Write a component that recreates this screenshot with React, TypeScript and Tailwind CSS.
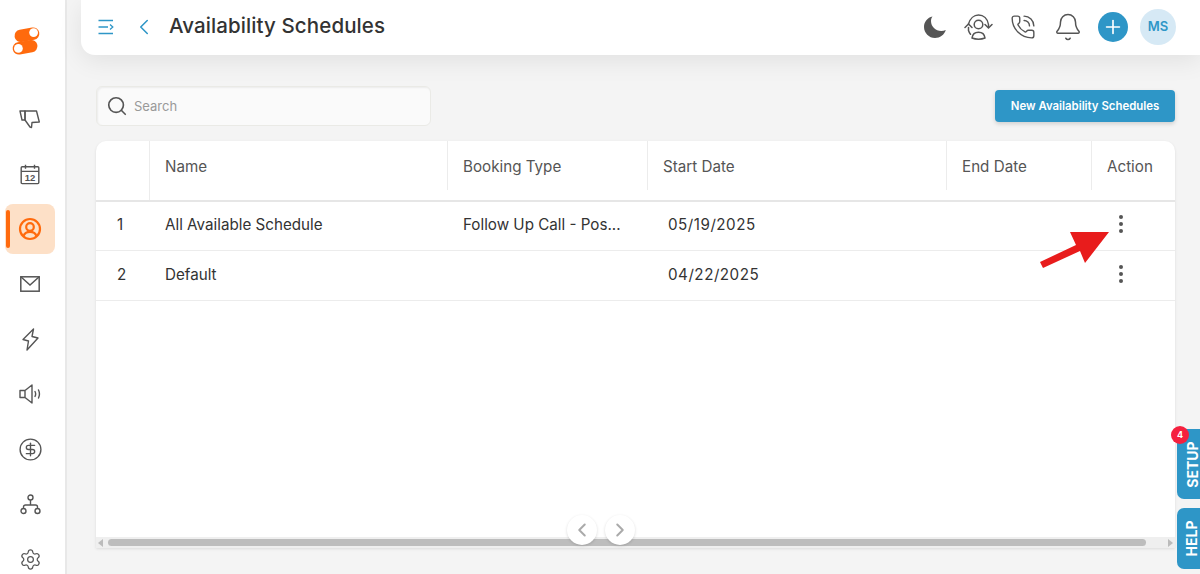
import React from 'react';
import { Bell, ChevronLeft, ChevronRight, CircleDollarSign, PhoneCall, Plus, Search, Settings } from 'lucide-react';

const Logo = () => (
  <svg width="30" height="30" viewBox="0 0 30 30">
    <g transform="rotate(-10 15 15)">
      <rect x="4.5" y="2.8" width="25" height="12.4" rx="6.2" fill="#ff6a0d" />
      <rect x="0.5" y="14.8" width="25" height="12.4" rx="6.2" fill="#ff6a0d" />
    </g>
    <circle cx="22.6" cy="6.6" r="4.4" fill="#fff" />
    <circle cx="7.4" cy="22.4" r="4.4" fill="#fff" />
  </svg>
);

const ThumbIcon = () => (
  <svg width="22" height="19" viewBox="0 0 22 19" fill="none" stroke="#555" strokeWidth="1.4" strokeLinejoin="round">
    <path d="M1 1h5v9H3z" />
    <path d="M6 1h11.500l2.800 11-7.300.5-.5 5-1.500-.5L6 10z" />
  </svg>
);

const CalendarIcon = () => (
  <svg width="20" height="21" viewBox="0 0 20 21" fill="none" stroke="#555" strokeWidth="1.4">
    <rect x="1.2" y="2.8" width="17.6" height="16.8" rx="1" />
    <path d="M1.2 7.4h17.6M5.5 .8v4M14.5 .8v4" />
    <text x="10" y="17" textAnchor="middle" fontSize="9.5" fontWeight="600" fill="#555" stroke="none" fontFamily="Liberation Sans, sans-serif">12</text>
  </svg>
);

const ProfileIcon = () => (
  <svg width="24" height="24" viewBox="0 0 24 24" fill="none" stroke="#ff6a0d" strokeWidth="2.2">
    <circle cx="12" cy="12" r="10" />
    <circle cx="12" cy="10" r="3.8" />
    <path d="M5.5 19c1-3 3.600-4.200 6.500-4.200s5.500 1.200 6.500 4.200" />
  </svg>
);

const MailIcon = () => (
  <svg width="20" height="16" viewBox="0 0 20 16" fill="none" stroke="#555" strokeWidth="1.5">
    <rect x=".8" y=".8" width="18.400" height="14.400" />
    <path d="M.8 .8 10 9l9.200-8.200" />
  </svg>
);

const BoltIcon = () => (
  <svg width="17" height="23" viewBox="0 0 17 23" fill="none" stroke="#555" strokeWidth="1.4" strokeLinejoin="round">
    <path d="M11.500 1 1 11.500l5.500 1.500L5 22 16 10l-6-1.500z" />
  </svg>
);

const SpeakerIcon = () => (
  <svg width="22" height="20" viewBox="0 0 22 20" fill="none" stroke="#555" strokeWidth="1.4" strokeLinejoin="round" strokeLinecap="round">
    <path d="M1 6.500h5V13.500H1zM6 6.500 13 1v18l-7-5.500" />
    <path d="M16 7.500c.8 1.500.8 3.500 0 5M19.500 6c1.200 2.500 1.200 5.500 0 8" />
  </svg>
);

const OrgIcon = () => (
  <svg width="21" height="21" viewBox="0 0 21 21" fill="none" stroke="#555" strokeWidth="1.4">
    <circle cx="10.500" cy="3.500" r="2.500" />
    <circle cx="3.500" cy="17" r="2.500" />
    <circle cx="17.500" cy="17" r="2.500" />
    <path d="M10.500 6v5M3.500 14.500v-1.500a2 2 0 0 1 2-2h10a2 2 0 0 1 2 2v1.500" />
  </svg>
);

const MenuIcon = () => (
  <svg width="16" height="16" viewBox="0 0 16 16" fill="none" stroke="#2e96c7" strokeWidth="1.300">
    <path d="M.5 1.500h14.500M.5 8h9.500M.5 14.500h14.500M12 5.500 14.800 8 12 10.500" />
  </svg>
);

const SyncUserIcon = () => (
  <svg width="29" height="26" viewBox="0 0 29 26" fill="none" stroke="#555" strokeWidth="1.500" strokeLinecap="round" strokeLinejoin="round">
    <circle cx="14.500" cy="10.500" r="4.300" />
    <path d="M8 24c.5-3.800 3-5.800 6.500-5.800s6 2 6.500 5.800c-2 .8-4.200 1.200-6.500 1.200S10 24.800 8 24z" />
    <path d="M4.500 10C6 4.500 10 1 14.500 1c5 0 9 3.500 10 9.500v3" />
    <path d="M4.500 13.500v3c.5 1.500 1.200 2.800 2 3.800" />
    <path d="M1 13.500l3.500-3.500 3.500 3.500M21 10.500l3.500 3.500 3.500-3.500" />
  </svg>
);

const Moon = () => (
  <svg width="22" height="22" viewBox="0 0 22 22">
    <path d="M8.500 .5C3.500 1.500 0 5.800 0 11c0 6 5 11 11 11 5 0 9.300-3.200 10.800-8-1.500.7-3 1-4.500 1C11.500 15 7 10.500 7 5c0-1.700.5-3.200 1.500-4.500z" fill="#555" />
  </svg>
);

const RedArrow = () => (
  <svg width="70" height="37" viewBox="0 0 70 37">
    <path d="M0 30 36 13 30 0 69 0 45 31 40 19 3 36z" fill="#e81c1c" />
  </svg>
);

const sideItems = [
  { icon: <ThumbIcon /> },
  { icon: <CalendarIcon /> },
  { icon: <ProfileIcon />, active: true },
  { icon: <MailIcon /> },
  { icon: <BoltIcon /> },
  { icon: <SpeakerIcon /> },
  { icon: <CircleDollarSign size={25} color="#555" strokeWidth={1.3} /> },
  { icon: <OrgIcon /> },
  { icon: <Settings size={23} color="#555" strokeWidth={1.3} /> },
];

const Dots = () => (
  <div className="flex flex-col gap-[3px] -mt-[4px]">
    <span className="w-[4px] h-[4px] rounded-full bg-[#555]" />
    <span className="w-[4px] h-[4px] rounded-full bg-[#555]" />
    <span className="w-[4px] h-[4px] rounded-full bg-[#555]" />
  </div>
);

const rows = [
  { no: '1', name: 'All Available Schedule', type: 'Follow Up Call - Pos...', start: '05/19/2025' },
  { no: '2', name: 'Default', type: '', start: '04/22/2025' },
];

export default function App() {
  return (
    <div className="relative flex w-[1200px] h-[574px] overflow-hidden bg-[#f4f4f4] text-[#333] font-['Inter',sans-serif]">
      <aside className="w-[67px] shrink-0 bg-white border-r-2 border-[#e8e8e8] flex flex-col items-center pt-[26px] pr-[5px]">
        <div className="flex mr-[8px]"><Logo /></div>
        <div className="mt-[38px] flex flex-col gap-[5px]">
          {sideItems.map((item, i) => (
            <div key={i} className={`relative w-[50px] h-[50px] flex items-center justify-center rounded-[8px] ${item.active ? 'bg-[#fde0c7]' : ''}`}>
              {item.active && <span className="absolute left-[1px] top-[6px] w-[4px] h-[38px] rounded-full bg-[#ff6a0d]" />}
              {item.icon}
            </div>
          ))}
        </div>
      </aside>

      <main className="flex-1 min-w-0 flex flex-col">
        <header className="ml-[14px] h-[55px] shrink-0 bg-white rounded-bl-[14px] shadow-[0_6px_24px_rgba(0,0,0,0.08)] flex items-center pl-[17px] pr-[24px] pb-[1px]">
          <MenuIcon />
          <ChevronLeft size={26} color="#2e96c7" strokeWidth={1.4} className="ml-[17px]" />
          <h1 className="ml-[12px] -mt-[1px] text-[20.500px] font-medium text-[#333] tracking-[0.1px]">Availability Schedules</h1>
          <div className="ml-auto flex items-center">
            <Moon />
            <span className="ml-[18px] flex"><SyncUserIcon /></span>
            <PhoneCall size={26} color="#555" strokeWidth={1.3} className="ml-[17px]" />
            <Bell size={30} color="#555" strokeWidth={1.2} className="ml-[17px]" />
            <span className="ml-[15px] w-[30px] h-[30px] rounded-full bg-[#2e96c7] flex items-center justify-center">
              <Plus size={22} color="#fff" strokeWidth={1.8} />
            </span>
            <span className="ml-[12px] w-[36px] h-[36px] rounded-full bg-[#d6e9f5] flex items-center justify-center text-[13px] font-semibold text-[#2e96c7]">MS</span>
          </div>
        </header>

        <div className="flex-1 min-h-0 flex flex-col pl-[29px] pr-[25px] pt-[31px] pb-[26px]">
          <div className="flex items-center justify-between h-[40px]">
            <div className="w-[335px] h-[40px] rounded-[6px] bg-[#fafafa] border border-[#eaeae6] shadow-[inset_1px_1px_2px_rgba(0,0,0,0.06)] flex items-center pl-[9px] gap-[6px]">
              <Search size={22} color="#555" strokeWidth={1.8} />
              <span className="text-[13px] text-[#999] pt-[1px]">Search</span>
            </div>
            <button className="w-[180px] h-[32px] pt-[1px] rounded-[4px] bg-[#2e96c7] text-white text-[11.400px] font-semibold shadow-[0_2px_4px_rgba(0,0,0,0.15)]">
              New Availability Schedules
            </button>
          </div>

          <div className="mt-[15px] flex-1 min-h-0 bg-white rounded-t-[10px] flex flex-col shadow-[0_1px_3px_rgba(0,0,0,0.1)] text-[15.200px]">
            <div className="flex h-[61px] shrink-0 border-b-2 border-[#e6e6e6] text-[#555] items-stretch">
              <div className="w-[54px] border-r border-[#ececec]" />
              <div className="w-[298px] pl-[15px] pt-[4px] flex items-center border-r border-[#ececec] mb-[10px]">Name</div>
              <div className="w-[200px] pl-[15px] pt-[4px] flex items-center border-r border-[#ececec] mb-[10px]">Booking Type</div>
              <div className="w-[299px] pl-[15px] pt-[4px] flex items-center border-r border-[#ececec] mb-[10px]">Start Date</div>
              <div className="w-[145px] pl-[15px] pt-[4px] flex items-center border-r border-[#ececec] mb-[10px]">End Date</div>
              <div className="flex-1 pl-[15px] pt-[4px] flex items-center mb-[10px]">Action</div>
            </div>
            {rows.map((r, i) => (
              <div key={r.no} className={`flex shrink-0 items-center border-b border-[#ececec] text-[#333] ${i === 0 ? 'h-[49px] pb-[1px]' : 'h-[50px]'}`}>
                <div className="w-[54px] pl-[21px]">{r.no}</div>
                <div className="w-[298px] pl-[15px]">{r.name}</div>
                <div className="w-[200px] pl-[15px]">{r.type}</div>
                <div className="w-[299px] pl-[20px] tracking-[0.5px]">{r.start}</div>
                <div className="w-[145px]" />
                <div className="flex-1 pl-[27px]"><Dots /></div>
              </div>
            ))}
            <div className="flex-1" />
            <div className="h-[11px] shrink-0 bg-[#efefef] flex items-center px-[2px] gap-[4px]">
              <span className="w-0 h-0 border-y-[4px] border-y-transparent border-r-[5px] border-r-[#bbb]" />
              <span className="flex-1 h-[7px] ml-[1px] rounded-full bg-[#bdbdbd]" />
              <span className="w-0 h-0 ml-[18px] border-y-[4px] border-y-transparent border-l-[5px] border-l-[#bbb]" />
            </div>
          </div>
        </div>
      </main>

      <div className="absolute left-[1040px] top-[232px]"><RedArrow /></div>

      <div className="absolute left-[567px] top-[515px] flex gap-[8px]">
        <span className="w-[30px] h-[30px] rounded-full bg-white shadow-[0_1px_3px_rgba(0,0,0,0.15)] flex items-center justify-center">
          <ChevronLeft size={22} color="#aaa" strokeWidth={2.2} />
        </span>
        <span className="w-[30px] h-[30px] rounded-full bg-white shadow-[0_1px_3px_rgba(0,0,0,0.15)] flex items-center justify-center">
          <ChevronRight size={22} color="#aaa" strokeWidth={2.2} />
        </span>
      </div>

      <div className="absolute left-[1177px] top-[429px] flex flex-col gap-[9px]">
        <div className="w-[30px] h-[70px] rounded-l-[7px] bg-[#2e96c7] flex items-center justify-center">
          <span className="-rotate-90 text-white text-[14px] font-bold whitespace-nowrap">SETUP</span>
        </div>
        <div className="w-[30px] h-[61px] rounded-l-[7px] bg-[#2e96c7] flex items-center justify-center">
          <span className="-rotate-90 text-white text-[14px] font-bold whitespace-nowrap">HELP</span>
        </div>
      </div>
      <span className="absolute left-[1171px] top-[426px] w-[18px] h-[18px] rounded-full bg-[#f5213f] text-white text-[9px] font-bold flex items-center justify-center">4</span>
    </div>
  );
}
